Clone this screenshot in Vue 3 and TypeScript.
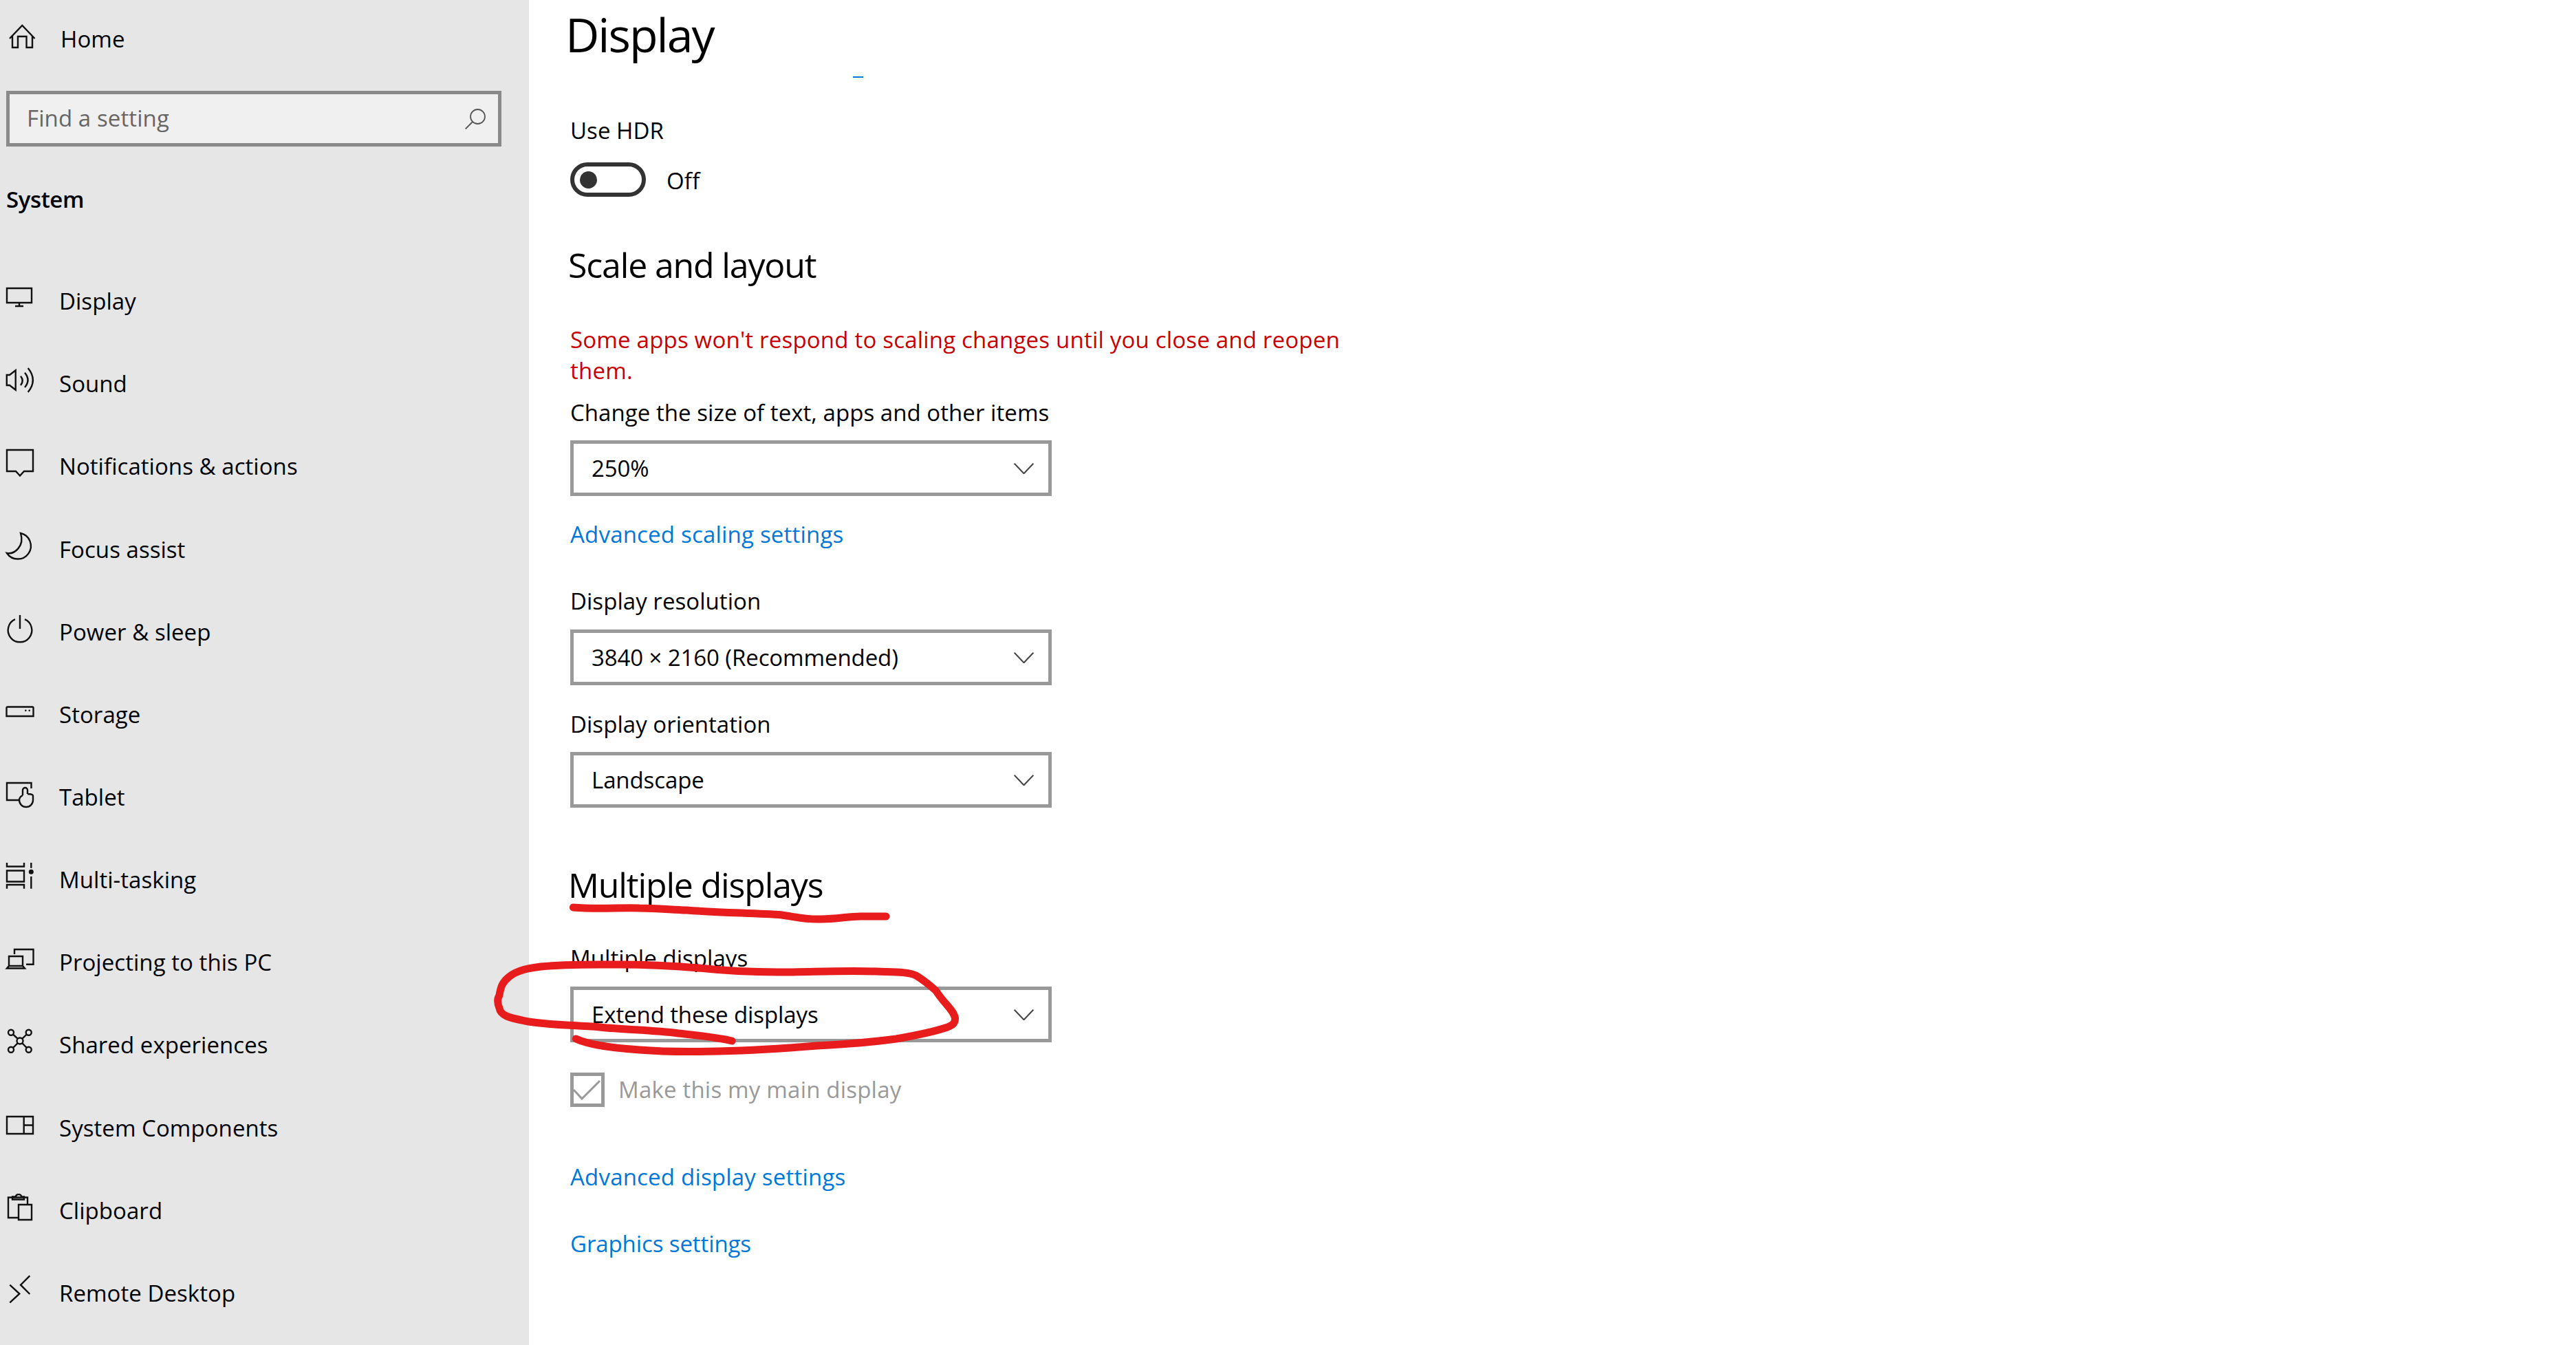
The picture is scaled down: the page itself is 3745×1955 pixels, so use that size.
<script setup lang="ts">
interface NavItem {
  label: string
  stroke: string
  fill?: string
}

const items: NavItem[] = [
  { label: 'Display', stroke: 'M1 6H37V27H1Z M19 27V31 M13 32H25' },
  { label: 'Sound', stroke: 'M0.8 12H5L13.7 5.3V33.7L5 27H0.8Z M21 13.7Q26.5 20.3 21 27 M27 8.7Q36 19.5 27 30 M31.7 2Q46 19.5 31.7 37' },
  { label: 'Notifications & actions', stroke: 'M1 1H39V32H26L20 38.5L14 32H1Z' },
  { label: 'Focus assist', stroke: 'M21 1A19 19 0 1 1 1 30C12 32 27 20 21 1Z' },
  { label: 'Power & sleep', stroke: 'M13 6.2A17.3 17.3 0 1 0 27 6.2 M20 0V20' },
  { label: 'Storage', stroke: 'M2 13.5H38A1.5 1.5 0 0 1 39.5 15V27H0.5V15A1.5 1.5 0 0 1 2 13.5Z', fill: 'M27 18.7a1.3 1.3 0 1 0 2.6 0a1.3 1.3 0 1 0-2.6 0Z M32.4 18.7a1.3 1.3 0 1 0 2.6 0a1.3 1.3 0 1 0-2.6 0Z' },
  { label: 'Tablet', stroke: 'M19 29H1V4H36.5V12 M24 22C20 24 19 26 19 29A10 10 0 0 0 39 29V23C39 21 35 20 31 20 M24 22V14.5A3.5 3.5 0 0 1 31 14.5V20' },
  { label: 'Multi-tasking', stroke: 'M1 0V5.5H26V0 M1 11.5H26V27.5H1Z M1 37.7V32H26V37.7 M36.3 0V7.7 M36.3 20V37.7', fill: 'M32.8 13.3a3.5 3.5 0 1 0 7 0a3.5 3.5 0 1 0-7 0Z' },
  { label: 'Projecting to this PC', stroke: 'M12 13V6H39.5V27.7H29 M4 30V16H24V30 M1 33.5L4 30H24L27 33.5Z' },
  { label: 'Shared experiences', stroke: 'M15.5 19a4.5 4.5 0 1 0 9 0a4.5 4.5 0 1 0-9 0Z M3 6.7a4 4 0 1 0 8 0a4 4 0 1 0-8 0Z M28.7 6.7a4 4 0 1 0 8 0a4 4 0 1 0-8 0Z M3 31.7a4 4 0 1 0 8 0a4 4 0 1 0-8 0Z M28.7 31.7a4 4 0 1 0 8 0a4 4 0 1 0-8 0Z M10 9.5L16.8 15.8 M29.8 9.5L23.2 15.8 M10 29L16.8 22.2 M29.8 29L23.2 22.2' },
  { label: 'System Components', stroke: 'M1 8H39V33H1Z M25.7 8V33 M25.7 20.5H39' },
  { label: 'Clipboard', stroke: 'M17.7 35H3V5.5H31V16 M9 8.5V4.5H14C14 0 22 0 22 4.5H26V8.5Z M18 16H37V38H18Z' },
  { label: 'Remote Desktop', stroke: 'M34.3 -0.7L21 12.7L34.3 26 M5.3 12.7L19.3 25.5L5.3 38.3' },
]
</script>

<template>
  <div class="page">
    <aside class="sidebar">
      <div class="nav-row home-row">
        <svg class="nav-icon home-icon" viewBox="0 0 40 40">
          <path d="M5 22L23.3 3L41.5 22 M9 18V35H17V19H29.5V35H38V18" />
        </svg>
        <span class="nav-label home-label">Home</span>
      </div>
      <div class="search">
        <span class="search-text">Find a setting</span>
        <svg class="search-icon" viewBox="0 0 30 30">
          <circle cx="18.5" cy="11.5" r="10.5" />
          <path d="M11 19L0.7 29.5" />
        </svg>
      </div>
      <div class="system">System</div>
      <nav class="nav">
        <div v-for="item in items" :key="item.label" class="nav-row">
          <svg class="nav-icon" viewBox="0 0 40 40">
            <path :d="item.stroke" />
            <path v-if="item.fill" class="solid" :d="item.fill" />
          </svg>
          <span class="nav-label">{{ item.label }}</span>
        </div>
      </nav>
    </aside>

    <main class="main">
      <h1 class="title">Display</h1>
      <div class="speck"></div>

      <div class="label hdr">Use HDR</div>
      <div class="toggle-row">
        <div class="toggle"><span class="dot"></span></div>
        <span class="off">Off</span>
      </div>

      <h2 class="heading scale">Scale and layout</h2>
      <p class="warning">Some apps won't respond to scaling changes until you close and reopen<br />them.</p>
      <div class="label change">Change the size of text, apps and other items</div>
      <div class="select s1">
        <span>250%</span>
        <svg class="chevron" viewBox="0 0 29 16"><path d="M0.7 0.7L14.5 15.3L28.3 0.7" /></svg>
      </div>
      <a class="link adv-scale">Advanced scaling settings</a>

      <div class="label res">Display resolution</div>
      <div class="select s2">
        <span>3840 × 2160 (Recommended)</span>
        <svg class="chevron" viewBox="0 0 29 16"><path d="M0.7 0.7L14.5 15.3L28.3 0.7" /></svg>
      </div>
      <div class="label orient">Display orientation</div>
      <div class="select s3">
        <span>Landscape</span>
        <svg class="chevron" viewBox="0 0 29 16"><path d="M0.7 0.7L14.5 15.3L28.3 0.7" /></svg>
      </div>

      <h2 class="heading multi">Multiple displays</h2>
      <div class="label multi-label">Multiple displays</div>
      <div class="select s4">
        <span>Extend these displays</span>
        <svg class="chevron" viewBox="0 0 29 16"><path d="M0.7 0.7L14.5 15.3L28.3 0.7" /></svg>
      </div>
      <div class="check-row">
        <div class="checkbox">
          <svg viewBox="0 0 40 40"><path d="M0 20L12 33L38 7" /></svg>
        </div>
        <span class="check-label">Make this my main display</span>
      </div>
      <a class="link adv-display">Advanced display settings</a>
      <a class="link graphics">Graphics settings</a>
    </main>

    <svg class="ink" viewBox="0 0 3745 1955">
      <g transform="translate(700 0) scale(0.995 1) translate(-700 0)">
        <path d="M834 1319C870 1322 900 1319 931 1320C955 1320 975 1322 1000 1323C1050 1327 1100 1327 1139 1330C1160 1333 1175 1337 1196 1336C1220 1336 1235 1332 1254 1332L1291 1332" />
        <path d="M1066 1513C1040 1507 1015 1505 988 1502C950 1497 910 1497 873 1493C835 1490 800 1490 769 1485C745 1480 728 1478 726 1465C722 1455 724 1450 726 1447C728 1435 730 1428 740 1420C752 1410 770 1407 787 1405C825 1401 865 1402 902 1402C940 1402 980 1404 1017 1407C1055 1411 1095 1413 1133 1413C1180 1413 1230 1410 1277 1412C1300 1413 1322 1412 1335 1418C1345 1424 1355 1432 1364 1440C1375 1458 1390 1468 1392 1480C1392 1488 1388 1490 1381 1493C1360 1500 1335 1505 1306 1510C1268 1515 1230 1518 1190 1520C1142 1524 1095 1527 1046 1528C1005 1529 968 1529 931 1526C900 1524 860 1520 838 1510" />
      </g>
    </svg>
  </div>
</template>

<style scoped>
.page {
  position: relative;
  display: flex;
  width: 3745px;
  height: 1955px;
  overflow: hidden;
  background: #fff;
  color: #000;
  font-family: "Open Sans", "Noto Sans", sans-serif;
}

.sidebar {
  flex: 0 0 769px;
  box-sizing: border-box;
  background: #e6e6e6;
}

.nav-row {
  display: flex;
  align-items: center;
  height: 120.17px;
  padding-left: 9px;
}

.home-row {
  height: 113px;
}

.nav-icon {
  flex: none;
  width: 40px;
  height: 40px;
  margin-top: -10px;
  overflow: visible;
  fill: none;
  stroke: #111;
  stroke-width: 2.4;
}

.home-icon {
  margin-top: -6px;
}

.nav-icon .solid {
  fill: #111;
  stroke: none;
}

.nav-label {
  margin-left: 37px;
  font-size: 33px;
  line-height: 46px;
  letter-spacing: 0.05px;
  white-space: nowrap;
}

.home-label {
  margin-left: 39px;
}

.search {
  display: flex;
  align-items: center;
  justify-content: space-between;
  box-sizing: border-box;
  width: 720px;
  height: 81px;
  margin: 19px 0 0 9px;
  padding: 0 18px 0 25px;
  border: 5px solid #8a8a8a;
  background: #f0f0f0;
}

.search-text {
  margin-top: -2px;
  font-size: 33px;
  letter-spacing: 0.1px;
  color: #666;
}

.search-icon {
  width: 30px;
  height: 30px;
  fill: none;
  stroke: #555;
  stroke-width: 1.8;
}

.system {
  height: 46px;
  margin: 54px 0 65px 9px;
  font-size: 33px;
  font-weight: 600;
  line-height: 46px;
  letter-spacing: -0.4px;
}

.main {
  position: relative;
  flex: 1;
  padding-left: 60px;
  font-size: 33px;
  line-height: 46px;
  letter-spacing: 0.2px;
}

.title {
  height: 100px;
  margin: 0 0 0 -7px;
  font-size: 68px;
  font-weight: 400;
  line-height: 100px;
  letter-spacing: -2px;
}

.speck {
  position: absolute;
  top: 111px;
  left: 471px;
  width: 15px;
  height: 2px;
  background: #0078d7;
}

.label,
.link {
  display: block;
  height: 46px;
  white-space: nowrap;
}

.label {
  letter-spacing: 0.05px;
}

.link {
  color: #0078d7;
}

.hdr { margin-top: 67px; }
.change { margin-top: 16.5px; }
.adv-scale { margin-top: 33px; }
.res { margin-top: 51px; }
.orient { margin-top: 34px; }
.multi-label { margin-top: 54px; }
.adv-display { margin-top: 79px; }
.graphics {
  margin-top: 51px;
  letter-spacing: -0.1px;
}

.toggle-row {
  display: flex;
  align-items: center;
  height: 50px;
  margin-top: 23px;
}

.toggle {
  display: flex;
  align-items: center;
  box-sizing: border-box;
  width: 110px;
  height: 50px;
  padding-left: 8px;
  border: 6px solid #333;
  border-radius: 25px;
}

.dot {
  width: 25px;
  height: 25px;
  border-radius: 50%;
  background: #333;
}

.off {
  margin: 4px 0 0 30px;
}

.heading {
  height: 60px;
  margin: 0 0 0 -3px;
  font-size: 50px;
  font-weight: 400;
  line-height: 60px;
  letter-spacing: -1.15px;
}

.scale { margin-top: 69px; }
.multi { margin-top: 82px; }

.warning {
  margin: 55.5px 0 0;
  color: #c80000;
  line-height: 45px;
  white-space: nowrap;
}

.select {
  display: flex;
  align-items: center;
  justify-content: space-between;
  box-sizing: border-box;
  width: 700px;
  height: 81px;
  padding: 0 21px 0 26px;
  border: 5px solid #999;
  background: #fff;
  letter-spacing: -0.1px;
}

.s1 { margin-top: 17px; }
.s2 { margin-top: 18px; }
.s3 { margin-top: 17px; }
.s4 { margin-top: 18px; }

.chevron {
  width: 29px;
  height: 16px;
  fill: none;
  stroke: #444;
  stroke-width: 2;
}

.check-row {
  display: flex;
  align-items: center;
  height: 50px;
  margin-top: 44px;
  color: #999;
}

.checkbox {
  flex: none;
  box-sizing: border-box;
  width: 50px;
  height: 50px;
  border: 5px solid #999;
}

.checkbox svg {
  display: block;
  width: 40px;
  height: 40px;
  overflow: visible;
  fill: none;
  stroke: #999;
  stroke-width: 3;
}

.check-label {
  margin-left: 20px;
}

.ink {
  position: absolute;
  inset: 0;
  width: 3745px;
  height: 1955px;
  pointer-events: none;
  fill: none;
  stroke: #e81c1c;
  stroke-width: 11;
  stroke-linecap: round;
  stroke-linejoin: round;
}
</style>

<style>
html,
body {
  margin: 0;
  background: #fff;
}
</style>
